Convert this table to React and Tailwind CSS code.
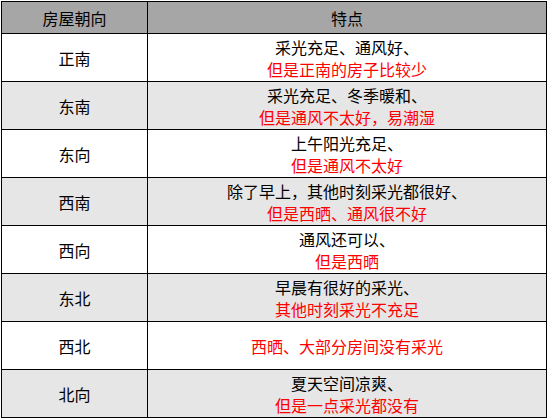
import React from 'react';

const rows = [
  { dir: '正南', good: '采光充足、通风好、', bad: '但是正南的房子比较少' },
  { dir: '东南', good: '采光充足、冬季暖和、', bad: '但是通风不太好，易潮湿' },
  { dir: '东向', good: '上午阳光充足、', bad: '但是通风不太好' },
  { dir: '西南', good: '除了早上，其他时刻采光都很好、', bad: '但是西晒、通风很不好' },
  { dir: '西向', good: '通风还可以、', bad: '但是西晒' },
  { dir: '东北', good: '早晨有很好的采光、', bad: '其他时刻采光不充足' },
  { dir: '西北', good: null, bad: '西晒、大部分房间没有采光' },
  { dir: '北向', good: '夏天空间凉爽、', bad: '但是一点采光都没有' },
];

const App = () => {
  return (
    <div
      className="ml-px mt-px w-[546px] border-l border-t border-black text-[16px] leading-[22px] text-black"
      style={{ fontFamily: '"Noto Sans CJK SC", "Noto Sans", sans-serif' }}
    >
      <div className="grid grid-cols-[146px_399px] h-[32px] bg-[#a6a6a6]">
        <div className="flex items-center justify-center border-r border-b border-black">房屋朝向</div>
        <div className="flex items-center justify-center border-r border-b border-black">特点</div>
      </div>
      {rows.map((r, i) => (
        <div
          key={r.dir}
          className={`grid grid-cols-[146px_399px] h-[48px] ${i % 2 === 1 ? 'bg-[#e6e6e6]' : 'bg-white'}`}
        >
          <div className="flex items-center justify-center border-r border-b border-black">{r.dir}</div>
          <div className="flex flex-col items-center justify-center border-r border-b border-black">
            {r.good && <span>{r.good}</span>}
            <span className="text-[#ff0000]">{r.bad}</span>
          </div>
        </div>
      ))}
    </div>
  );
};

export default App;
